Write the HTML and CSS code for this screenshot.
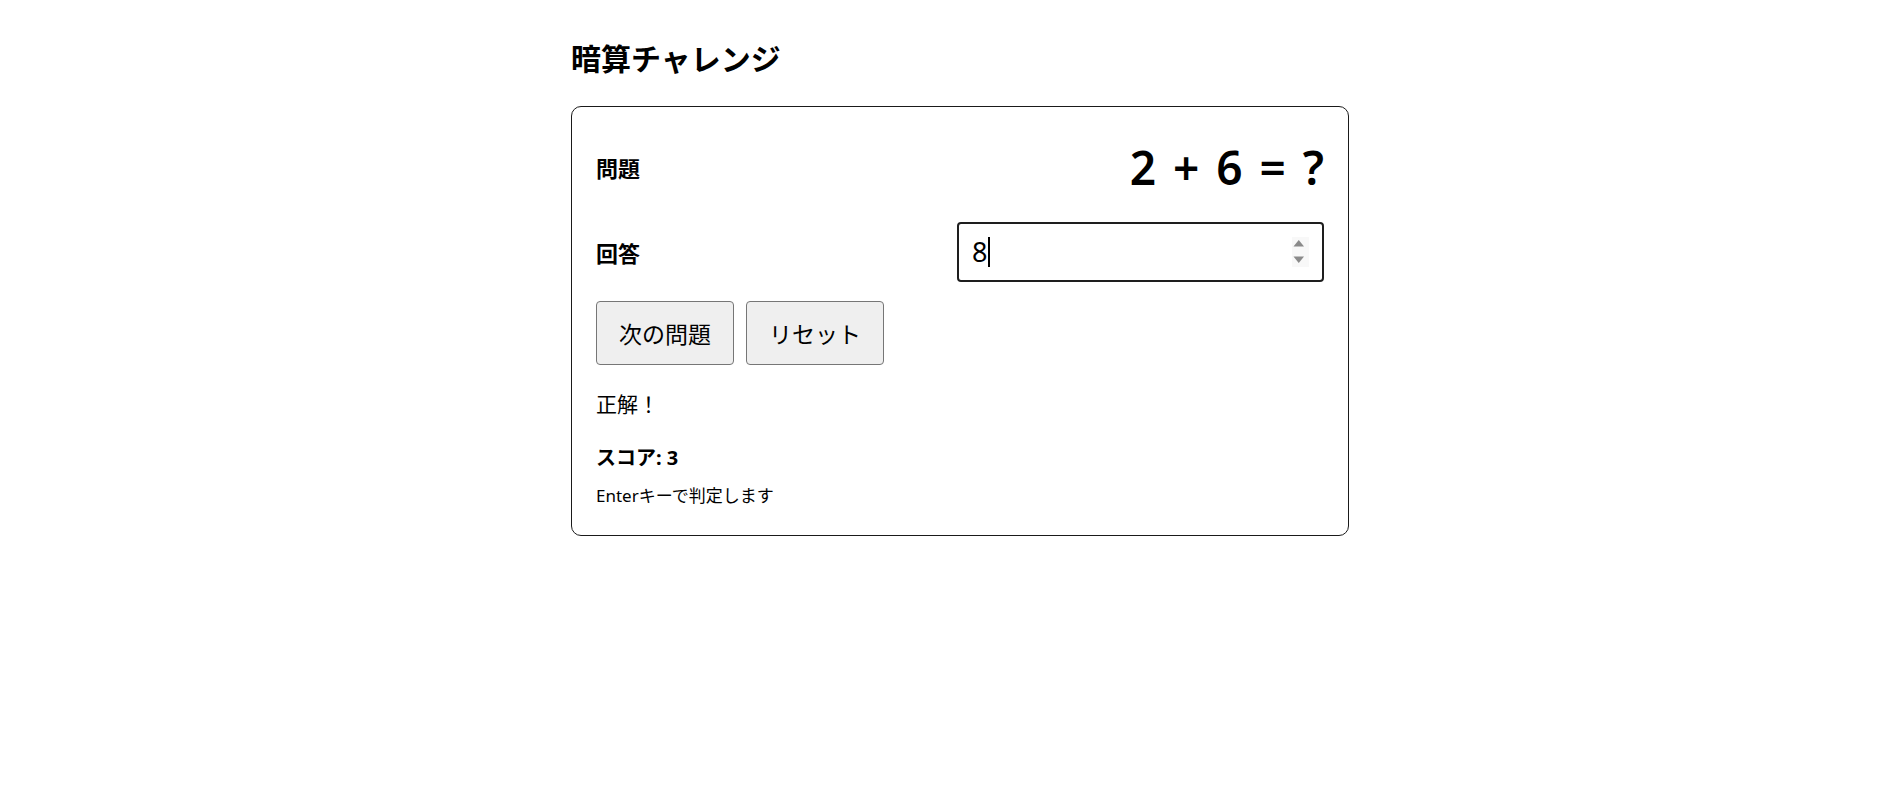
FILE: index.html
```html
<!DOCTYPE html>
<html lang="ja">
<head>
<meta charset="utf-8">
<title>暗算チャレンジ</title>
<link rel="stylesheet" href="styles.css">
</head>
<body>
<main class="page">
  <h1 class="title">暗算チャレンジ</h1>
  <section class="card">
    <div class="row row-question">
      <span class="label">問題</span>
      <span class="equation">2 + 6 = ?</span>
    </div>
    <div class="row row-answer">
      <span class="label">回答</span>
      <div class="answer-field">
        <span class="answer-value">8</span><span class="caret"></span>
        <span class="spinner">
          <svg width="18" height="30" viewBox="0 0 18 30">
            <rect x="0" y="0" width="17" height="30" fill="#f8f8f8"/>
            <path d="M1.5 9.5 L6.75 3 L12 9.5 Z" fill="#8a8a8a"/>
            <path d="M1.5 19.5 L12 19.5 L6.75 26 Z" fill="#8a8a8a"/>
          </svg>
        </span>
      </div>
    </div>
    <div class="actions">
      <button class="btn" type="button">次の問題</button>
      <button class="btn" type="button">リセット</button>
    </div>
    <p class="message">正解！</p>
    <p class="score">スコア: 3</p>
    <p class="hint">Enterキーで判定します</p>
  </section>
</main>
</body>
</html>
```
FILE: styles.css
```css
html, body {
  margin: 0;
  padding: 0;
  background: #ffffff;
}

body {
  padding-left: 18px;
  font-family: "Noto Sans", "Noto Sans CJK JP", sans-serif;
  color: #000;
  font-size: 20px;
}

.page {
  width: 778px;
  margin: 0 auto;
  padding-top: 37px;
}

.title {
  margin: 0 0 29px 0;
  font-size: 30px;
  line-height: 40px;
  font-weight: 700;
  font-family: "Noto Sans CJK JP", sans-serif;
}

.card {
  border: 1px solid #1a1a1a;
  border-radius: 10px;
  padding: 24px 24px 26px 24px;
}

.row {
  display: flex;
  align-items: center;
  justify-content: space-between;
}

.row-question {
  height: 72px;
}

.row-answer {
  margin-top: 19px;
}

.label {
  font-family: "Noto Sans CJK JP", sans-serif;
  font-weight: 700;
  font-size: 22px;
}

.equation {
  font-family: "Noto Sans", sans-serif;
  font-weight: 600;
  font-size: 46px;
  line-height: 60px;
  word-spacing: 5px;
}

.answer-field {
  box-sizing: border-box;
  width: 367px;
  height: 60px;
  border: 2px solid #1e1e1e;
  border-radius: 4px;
  display: flex;
  align-items: center;
  padding: 0 12px 0 13px;
}

.answer-value {
  font-family: "Noto Sans", sans-serif;
  font-size: 27px;
  line-height: 30px;
}

.caret {
  width: 2px;
  height: 30px;
  background: #000;
  margin-left: 1px;
}

.spinner {
  margin-left: auto;
  display: flex;
}

.actions {
  display: flex;
  gap: 12px;
  margin-top: 19px;
}

.btn {
  font-family: "Noto Sans CJK JP", sans-serif;
  font-size: 23px;
  line-height: 30px;
  padding: 16px 20px;
  width: 138px;
  background: #efefef;
  border: 1px solid #767676;
  border-radius: 4px;
  color: #000;
}

.message {
  margin: 20px 0 0 0;
  font-family: "Noto Sans CJK JP", sans-serif;
  font-size: 21px;
  line-height: 36px;
}

.score {
  margin: 22px 0 0 0;
  font-family: "Noto Sans", "Noto Sans CJK JP", sans-serif;
  font-weight: 700;
  font-size: 20px;
  line-height: 30px;
}

.hint {
  margin: 10px 0 0 0;
  font-family: "Noto Sans", "Noto Sans CJK JP", sans-serif;
  font-size: 17px;
  line-height: 26px;
}
```
